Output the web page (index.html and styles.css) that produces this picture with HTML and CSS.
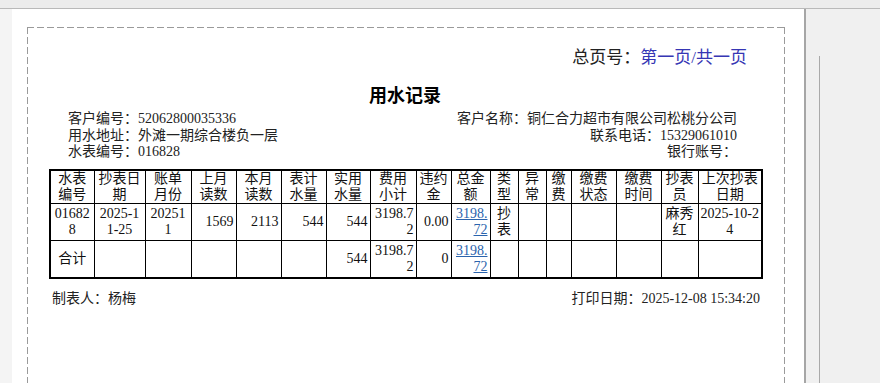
FILE: index.html
```html
<!DOCTYPE html>
<html lang="zh-CN">
<head>
<meta charset="utf-8">
<title>用水记录</title>
<link rel="stylesheet" href="styles.css">
</head>
<body>
<div class="topbar"></div>
<div class="workspace">
  <div class="gutter"></div>
  <div class="page">
    <div class="sheet">
      <div class="doc">
        <div class="pageno">总页号：<span class="pageno-val">第一页/共一页</span></div>
        <h1 class="title">用水记录</h1>
        <div class="info">
          <div class="info-left">
            <div>客户编号：52062800035336</div>
            <div>用水地址：外滩一期综合楼负一层</div>
            <div>水表编号：016828</div>
          </div>
          <div class="info-right">
            <div>客户名称：铜仁合力超市有限公司松桃分公司</div>
            <div>联系电话：15329061010</div>
            <div>银行账号：</div>
          </div>
        </div>
        <table class="grid">
          <colgroup>
            <col style="width:44px"><col style="width:51px"><col style="width:46px"><col style="width:45px"><col style="width:45px"><col style="width:45px"><col style="width:44px"><col style="width:46px"><col style="width:35px"><col style="width:39px"><col style="width:28px"><col style="width:28px"><col style="width:25px"><col style="width:45px"><col style="width:45px"><col style="width:37px"><col style="width:64px">
          </colgroup>
          <thead>
            <tr class="head-row">
              <th>水表编号</th><th>抄表日期</th><th>账单月份</th><th>上月读数</th><th>本月读数</th><th>表计水量</th><th>实用水量</th><th>费用小计</th><th>违约金</th><th>总金额</th><th>类型</th><th>异常</th><th>缴费</th><th>缴费状态</th><th>缴费时间</th><th>抄表员</th><th>上次抄表日期</th>
            </tr>
          </thead>
          <tbody>
            <tr class="data-row">
              <td class="c">016828</td><td class="c">2025-11-25</td><td class="c">202511</td><td class="r">1569</td><td class="r">2113</td><td class="r">544</td><td class="r">544</td><td class="r">3198.72</td><td class="r">0.00</td><td class="r"><a href="#" class="amount">3198.72</a></td><td class="c">抄表</td><td></td><td></td><td></td><td></td><td class="c">麻秀红</td><td class="c">2025-10-24</td>
            </tr>
            <tr class="data-row">
              <td class="c">合计</td><td></td><td></td><td></td><td></td><td></td><td class="r">544</td><td class="r">3198.72</td><td class="r">0</td><td class="r"><a href="#" class="amount">3198.72</a></td><td></td><td></td><td></td><td></td><td></td><td></td><td></td>
            </tr>
          </tbody>
        </table>
        <div class="footer">
          <div>制表人：杨梅</div>
          <div>打印日期：2025-12-08 15:34:20</div>
        </div>
      </div>
    </div>
  </div>
  <div class="divider"></div>
  <div class="side"><div class="side-line"></div></div>
</div>
</body>
</html>
```
FILE: styles.css
```css
html, body {
  margin: 0;
  height: 383px;
  overflow: hidden;
}
body {
  background: #f0f0f0;
  font-family: "Liberation Serif", "Noto Sans CJK SC", serif;
  color: #111;
}
.topbar {
  height: 8px;
  background: #ececec;
  border-bottom: 1px solid #b9b9b9;
}
.workspace {
  display: flex;
  height: 374px;
}
.gutter {
  width: 12px;
  background: #f4f4f4;
}
.page {
  width: 792px;
  background: #fff;
  padding: 18px 0 0 15px;
  box-sizing: border-box;
  overflow: hidden;
}
.divider {
  width: 2px;
  background: #a6a6a6;
}
.side {
  flex: 1;
  padding: 47px 0 0 13px;
  background: #f0f0f0;
}
.side-line {
  width: 1px;
  height: 100%;
  background: #a9a9a9;
}
.sheet {
  width: 758px;
  height: 420px;
  box-sizing: border-box;
  background:
    repeating-linear-gradient(90deg, #9a9a9a 0 7px, transparent 7px 10px) left top / 100% 1px no-repeat,
    repeating-linear-gradient(180deg, #9a9a9a 0 7px, transparent 7px 10px) left top / 1px 100% no-repeat,
    repeating-linear-gradient(180deg, #9a9a9a 0 7px, transparent 7px 10px) right top / 1px 100% no-repeat;
  padding-top: 21px;
}
.doc {
  width: 712px;
  margin-left: 22px;
}
.pageno {
  text-align: right;
  padding-right: 14px;
  font-size: 17px;
  line-height: 20px;
  color: #222;
}
.pageno-val {
  color: #3636b4;
}
.title {
  margin: 14px 0 0;
  text-align: center;
  font-family: "Noto Sans CJK SC", sans-serif;
  font-weight: bold;
  font-size: 18px;
  line-height: 24px;
  color: #000;
}
.info {
  display: flex;
  justify-content: space-between;
  padding: 5px 24px 0 19px;
  font-size: 14px;
  line-height: 16.5px;
  color: #222;
}
.info-right {
  text-align: right;
}
.grid {
  margin-top: 8px;
  width: 712px;
  table-layout: fixed;
  border-collapse: collapse;
  border: 2px solid #000;
  font-size: 14px;
  line-height: 16px;
  color: #111;
}
.grid th,
.grid td {
  border: 1px solid #000;
  padding: 0 2px;
  vertical-align: middle;
  word-break: break-all;
  overflow-wrap: anywhere;
}
.grid th {
  font-weight: normal;
  text-align: center;
}
.head-row {
  height: 34px;
}
.data-row {
  height: 37px;
}
.c {
  text-align: center;
}
.r {
  text-align: right;
}
.amount {
  color: #2a63ad;
  text-decoration: underline;
}
.footer {
  display: flex;
  justify-content: space-between;
  margin-top: 12px;
  padding: 0 1px 0 3px;
  font-size: 14px;
  line-height: 16px;
  color: #222;
}
```
